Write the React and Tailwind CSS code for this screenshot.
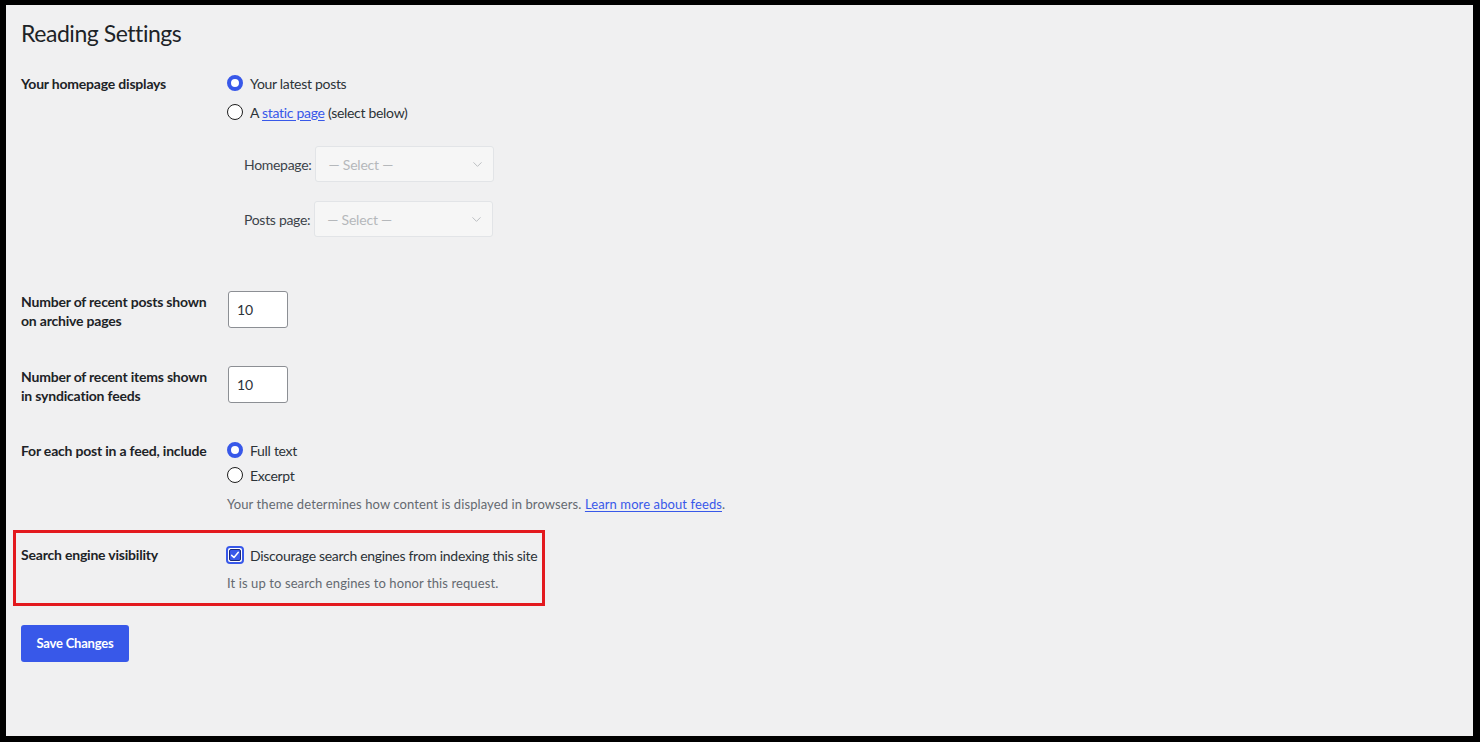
import { ChevronDown } from 'lucide-react'

const font = { fontFamily: 'Lato, "Noto Sans", sans-serif' }

const Radio = ({ checked }) => (
  <span
    className={`inline-block w-[16px] h-[16px] rounded-full box-border shrink-0 ${
      checked ? 'border-[4px] border-[#3858e9] bg-white' : 'border border-[#1e1e1e] bg-white'
    }`}
  />
)

const RadioOption = ({ checked, children }) => (
  <label className="flex items-center h-[20px] pl-[7px] gap-[7px] text-[14px] tracking-[-0.3px] text-[#2c3338]">
    <Radio checked={checked} />
    <span>{children}</span>
  </label>
)

const FakeSelect = ({ label }) => (
  <div className="flex items-center pl-[17px] h-[36px]">
    <span className="text-[14px] tracking-[-0.3px] text-[#3c434a] mr-[4px]">{label}</span>
    <div className="w-[179px] h-[36px] box-border border border-[#e2e4e7] bg-[#f6f6f6] rounded-[3px] flex items-center justify-between pl-[12px] pr-[8px]">
      <span className="text-[14px] tracking-[-0.2px] text-[#b5b8bb]">— Select —</span>
      <ChevronDown size={15} strokeWidth={1.5} className="text-[#b8bbbe]" />
    </div>
  </div>
)

const NumberField = () => (
  <div className="w-[60px] h-[37px] box-border border border-[#8c8f94] bg-white rounded-[3px] flex items-center pl-[8px] text-[14px] text-[#2c3338]">
    10
  </div>
)

const labelCls = 'w-[206px] shrink-0 text-[14px] tracking-[-0.2px] font-bold text-[#1d2327]'
const descCls = 'text-[13px] leading-[20px] tracking-[0.1px] text-[#646970]'

export default function App() {
  return (
    <div
      className="h-[742px] w-[1480px] box-border border-l-[6px] border-t-[5px] border-r-[7px] border-b-[6px] border-black bg-[#f0f0f1] overflow-hidden"
      style={font}
    >
      <div className="pl-[15px] pt-[13px] text-[#1d2327]">
        <h1 className="text-[23px] leading-[30px] font-normal tracking-[-0.45px]">Reading Settings</h1>

        {/* Homepage displays */}
        <div className="flex mt-[25px]">
          <div className={`${labelCls} pt-[1px] leading-[20px]`}>Your homepage displays</div>
          <div className="-ml-[7px]">
            <div className="flex flex-col gap-[9px]">
              <RadioOption checked>Your latest posts</RadioOption>
              <RadioOption>
                A{' '}
                <a className="text-[#3858e9] underline underline-offset-2">static page</a> (select below)
              </RadioOption>
            </div>
            <div className="mt-[24px] flex flex-col gap-[19px] pl-[7px]">
              <FakeSelect label="Homepage:" />
              <FakeSelect label="Posts page:" />
            </div>
          </div>
        </div>

        {/* Posts per page */}
        <div className="flex items-start mt-[54px]">
          <div className={`${labelCls} w-[207px] pt-[1px] leading-[19px]`}>
            Number of recent posts shown<br />on archive pages
          </div>
          <NumberField />
        </div>

        {/* Posts per rss */}
        <div className="flex items-start mt-[36px]">
          <div className={`${labelCls} w-[207px] pt-[1px] leading-[19px]`}>
            Number of recent items shown<br />in syndication feeds
          </div>
          <NumberField />
        </div>

        {/* Feed content */}
        <div className="flex mt-[35px]">
          <div className={`${labelCls} pt-[1px] leading-[20px]`}>For each post in a feed, include</div>
          <div className="-ml-[7px]">
            <div className="flex flex-col gap-[5px]">
              <RadioOption checked>Full text</RadioOption>
              <RadioOption>Excerpt</RadioOption>
            </div>
            <p className={`mt-[9px] pl-[7px] ${descCls}`}>
              Your theme determines how content is displayed in browsers.{' '}
              <a className="text-[#3858e9] underline underline-offset-2">Learn more about feeds</a>.
            </p>
          </div>
        </div>

        {/* Search engine visibility (highlighted) */}
        <div className="mt-[16px] -ml-[8px] w-[532px] box-border border-[3px] border-[#e3191e] pl-[5px] pt-[12px] pb-[10px] flex">
          <div className={`${labelCls} leading-[20px]`}>Search engine visibility</div>
          <div className="-ml-[1px]">
            <label className="flex items-center h-[20px] gap-[6px] text-[14px] tracking-[-0.3px] text-[#2c3338]">
              <span className="w-[18px] h-[18px] box-border rounded-[4px] border-2 border-[#3858e9] p-[1px] bg-white flex shrink-0">
                <span className="flex-1 rounded-[2px] bg-[#3858e9] border border-[#1c2a78] flex items-center justify-center">
                  <svg viewBox="0 0 12 12" className="w-[10px] h-[10px]">
                    <path d="M2 6.4 L4.8 9 L10 2.8" fill="none" stroke="white" strokeWidth="1.8" strokeLinecap="round" strokeLinejoin="round" />
                  </svg>
                </span>
              </span>
              <span>Discourage search engines from indexing this site</span>
            </label>
            <p className={`mt-[8px] pl-[1px] ${descCls}`}>It is up to search engines to honor this request.</p>
          </div>
        </div>

        <button className="mt-[19px] w-[108px] h-[37px] bg-[#3858e9] text-white text-[13px] font-bold tracking-[-0.2px] rounded-[3px]">
          Save Changes
        </button>
      </div>
    </div>
  )
}
